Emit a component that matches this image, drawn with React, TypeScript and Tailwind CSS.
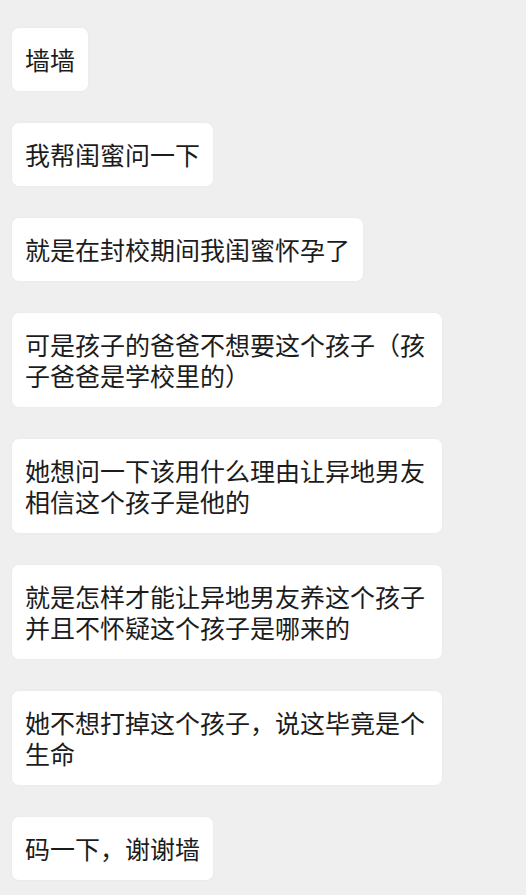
const messages = [
  '墙墙',
  '我帮闺蜜问一下',
  '就是在封校期间我闺蜜怀孕了',
  '可是孩子的爸爸不想要这个孩子（孩子爸爸是学校里的）',
  '她想问一下该用什么理由让异地男友相信这个孩子是他的',
  '就是怎样才能让异地男友养这个孩子并且不怀疑这个孩子是哪来的',
  '她不想打掉这个孩子，说这毕竟是个生命',
  '码一下，谢谢墙',
];

export default function App() {
  return (
    <div
      className="w-[526px] h-[895px] overflow-hidden bg-[#efefef] pt-[28px] pl-[12px] flex flex-col items-start gap-[32px]"
      style={{ fontFamily: '"Noto Sans CJK SC", "Noto Sans", sans-serif' }}
    >
      {messages.map((text, i) => (
        <div
          key={i}
          className="max-w-[430px] bg-white rounded-[7px] px-[13px] py-[16px] text-[25px] leading-[31px] text-[#1c1c1c] shadow-[0_0_3px_rgba(0,0,0,0.04)]"
        >
          {text}
        </div>
      ))}
    </div>
  );
}
